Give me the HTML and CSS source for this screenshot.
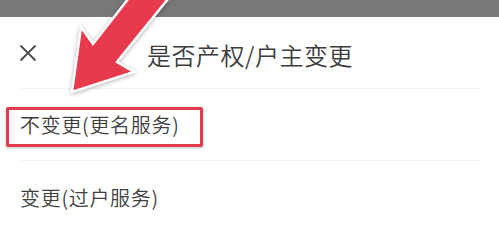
FILE: index.html
```html
<!DOCTYPE html>
<html lang="zh-CN">
<head>
<meta charset="utf-8">
<title>是否产权/户主变更</title>
<link rel="stylesheet" href="styles.css">
</head>
<body>
<div class="page">
  <div class="statusbar"></div>
  <header class="header">
    <svg class="close" width="20" height="20" viewBox="0 0 20 20" aria-hidden="true">
      <path d="M2.5 2.5 L17.5 17.5 M17.5 2.5 L2.5 17.5" stroke="#4d4d4d" stroke-width="1.8" fill="none"/>
    </svg>
    <h1 class="title">是否产权/户主变更</h1>
  </header>
  <div class="divider"></div>
  <div class="item">不变更(更名服务)</div>
  <div class="divider"></div>
  <div class="item">变更(过户服务)</div>

  <div class="highlight"></div>
  <svg class="arrow" width="499" height="229" viewBox="0 0 499 229" aria-hidden="true">
    <polygon points="72,92 81,27 93,44 132,-6 172,-6 117,62 134,72"
             fill="#e83a4d" stroke="#ffffff" stroke-width="2.5" stroke-linejoin="miter"/>
  </svg>
</div>
</body>
</html>
```

FILE: styles.css
```css
html, body {
  margin: 0;
  padding: 0;
  background: #ffffff;
}

.page {
  position: relative;
  width: 499px;
  height: 229px;
  overflow: hidden;
  font-family: "Noto Sans CJK SC", "Noto Sans", sans-serif;
  color: #444444;
}

.statusbar {
  height: 17px;
  background: #787878;
}

.header {
  height: 71px;
  display: flex;
  align-items: center;
  padding-left: 18px;
}

.close {
  flex: none;
}

.title {
  margin: 0 0 0 109px;
  font-size: 24px;
  font-weight: 350;
  letter-spacing: 0.5px;
  color: #3c3c3c;
  line-height: 1;
  position: relative;
  top: 2px;
}

.divider {
  height: 1px;
  background: #f3f3f3;
  margin: 0 19px 0 20px;
}

.item {
  height: 71px;
  display: flex;
  align-items: center;
  padding-left: 20px;
  font-size: 20px;
  font-weight: 350;
  letter-spacing: 0.7px;
  color: #404040;
}

.item + .divider + .item {
  height: 72px;
}

.highlight {
  position: absolute;
  left: 6px;
  top: 107px;
  width: 191px;
  height: 34px;
  border: 3.5px solid #e23b4e;
  border-radius: 2px;
  box-shadow: 0 1px 3px rgba(0, 0, 0, 0.25);
}

.arrow {
  position: absolute;
  left: 0;
  top: 0;
  filter: drop-shadow(0 1px 2px rgba(0, 0, 0, 0.3));
}
```
